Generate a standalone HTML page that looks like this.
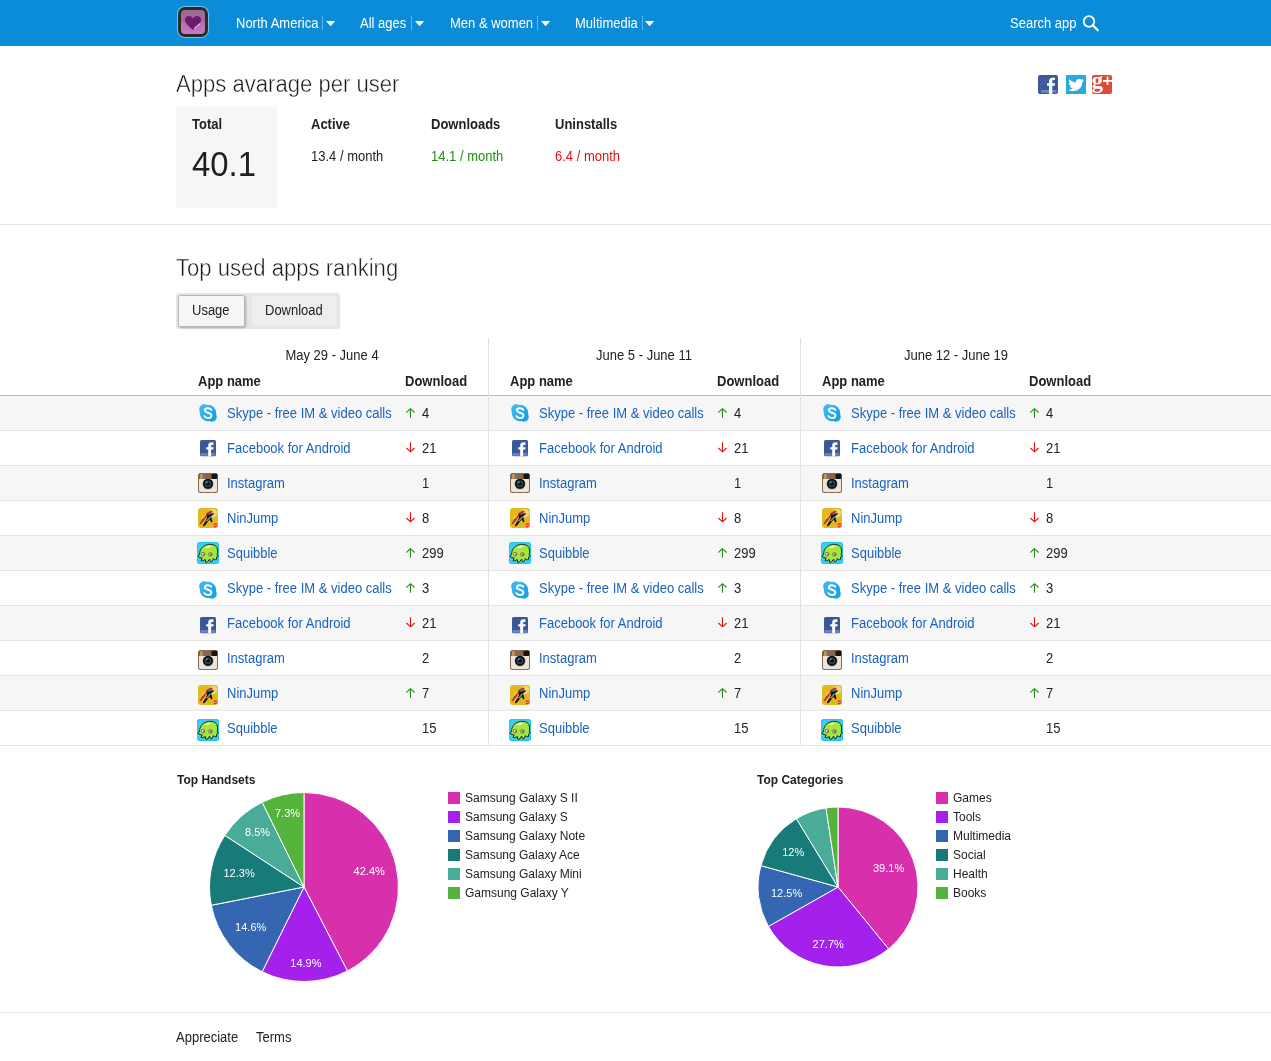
<!DOCTYPE html>
<html><head><meta charset="utf-8"><title>Apps</title>
<style>
*{margin:0;padding:0;box-sizing:border-box}
html,body{width:1271px;height:1061px;overflow:hidden;background:#fff}
#wrap{position:absolute;left:0;top:0;width:1271px;height:1061px;will-change:transform}
body{position:relative;font-family:"Liberation Sans",sans-serif;font-size:13px;color:#222}
.t{position:absolute;white-space:nowrap;line-height:13px;font-size:13px;transform:scaleY(1.1);transform-origin:0 6.5px}
.b{font-weight:bold}
#nav{position:absolute;left:0;top:0;width:1271px;height:46px;background:#0a8cd8}
.nv{color:#fff}
.sep{position:absolute;top:16px;width:1px;height:14px;background:#5fb6ea}
.tri{position:absolute;top:21px;width:10px;height:6px}
.tri svg{display:block}
h1.t{font-weight:normal;font-size:23px;line-height:23px;color:#1a1a1a;transform:scaleX(0.96);transform-origin:0 0;-webkit-text-stroke:0.45px #fff}
.row{position:absolute;left:0;width:1271px;height:34px}
.hl{position:absolute;left:0;width:1271px;height:1px;background:#e4e4e4}
.hl.hd{background:#bbb}
.vl{position:absolute;top:338px;width:1px;height:407px;background:#e2e2e2}
.date{width:312px;text-align:center}
.ib{position:absolute}
.ib svg,.ab svg{display:block}
.ab{position:absolute}
.lk{color:#1a62c0}
.sq{position:absolute;width:12px;height:12px}
.lg{font-size:12px;line-height:12px;transform:none}
</style></head><body><div id="wrap">
<div id="nav">
 <div style="position:absolute;left:178px;top:7px;width:30px;height:30px;border-radius:7px;background:#2c2a26;box-shadow:0 0 0 1px #6cc3f0"></div>
 <div style="position:absolute;left:181px;top:10px;width:24px;height:24px;border-radius:4px;background:linear-gradient(#9c6b95 0%,#9c6b95 45%,#b86fb5 55%,#c27cc0 100%)"></div>
 <svg style="position:absolute;left:184px;top:15px" width="18" height="16" viewBox="0 0 18 16"><path d="M9,15 C3,10 1,7.5 1,4.8 C1,2.5 2.8,1 4.8,1 C6.6,1 8,2 9,3.4 C10,2 11.4,1 13.2,1 C15.2,1 17,2.5 17,4.8 C17,7.5 15,10 9,15 Z" fill="#6e1a6e"/><path d="M10,13.5 L16,8.5" stroke="#f3e3f1" stroke-width="1"/></svg>
 <div class="t nv" style="left:236px;top:17px">North America</div>
 <div class="sep" style="left:322px"></div><div class="tri" style="left:326px"><svg width="10" height="6" viewBox="0 0 10 6"><path d="M0,0 H9.2 L4.6,5.2 Z" fill="#fff"/></svg></div>
 <div class="t nv" style="left:360px;top:17px">All ages</div>
 <div class="sep" style="left:411px"></div><div class="tri" style="left:415px"><svg width="10" height="6" viewBox="0 0 10 6"><path d="M0,0 H9.2 L4.6,5.2 Z" fill="#fff"/></svg></div>
 <div class="t nv" style="left:450px;top:17px">Men &amp; women</div>
 <div class="sep" style="left:537px"></div><div class="tri" style="left:541px"><svg width="10" height="6" viewBox="0 0 10 6"><path d="M0,0 H9.2 L4.6,5.2 Z" fill="#fff"/></svg></div>
 <div class="t nv" style="left:575px;top:17px">Multimedia</div>
 <div class="sep" style="left:642px"></div><div class="tri" style="left:645px"><svg width="10" height="6" viewBox="0 0 10 6"><path d="M0,0 H9.2 L4.6,5.2 Z" fill="#fff"/></svg></div>
 <div class="t nv" style="left:1010px;top:17px">Search app</div>
 <svg style="position:absolute;left:1081px;top:13px" width="20" height="20" viewBox="0 0 20 20"><circle cx="8" cy="8.5" r="5.3" fill="none" stroke="#fff" stroke-width="1.8"/><path d="M11.8,12.3 L16.8,17.3" stroke="#fff" stroke-width="2.2" stroke-linecap="round"/></svg>
</div>

<h1 class="t" style="left:176px;top:73px">Apps avarage per user</h1>
<div style="position:absolute;left:1038px;top:75px;width:20px;height:19px;border-radius:2px;background:#3b5998"><svg width="20" height="19" viewBox="0 0 20 19" style="display:block"><path d="M2,4 L5,7 L2,10 M5,4 L8,7 L5,10 M8,4 L10,6 M2,12 L4,14" stroke="#4a69a8" stroke-width="1" fill="none"/><rect x="3" y="15" width="15.5" height="2.8" fill="#6e85b9"/><path d="M11,19 V10.8 H9 V8.3 H11 V6.5 C11,4 12.2,2.7 14.5,2.7 H17 V4.9 H15.5 C14.6,4.9 14.3,5.3 14.3,6.2 V8.3 H17 L16.7,10.8 H14.3 V19 Z" fill="#fff"/></svg></div>
<div style="position:absolute;left:1066px;top:75px;width:20px;height:19px;background:#2aa9e0"><svg width="20" height="19" viewBox="0 0 20 19" style="display:block"><path transform="translate(10.1,9.8) scale(1.2,1.12) translate(-10.35,-9.45)" d="M17,5.2 C16.5,5.5 16,5.6 15.4,5.7 C16,5.3 16.4,4.8 16.6,4.2 C16.1,4.5 15.5,4.7 14.9,4.9 C14.4,4.3 13.7,4 12.9,4 C11.4,4 10.2,5.2 10.2,6.7 C10.2,6.9 10.2,7.1 10.3,7.3 C8,7.2 6,6.1 4.7,4.5 C4.4,4.9 4.3,5.4 4.3,5.9 C4.3,6.8 4.8,7.7 5.5,8.2 C5,8.2 4.6,8.1 4.3,7.9 C4.3,9.2 5.2,10.3 6.5,10.6 C6,10.7 5.6,10.8 5.2,10.7 C5.5,11.8 6.6,12.6 7.8,12.6 C6.8,13.4 5.6,13.8 4.3,13.8 C4.1,13.8 3.9,13.8 3.6,13.8 C4.8,14.6 6.3,15 7.8,15 C12.9,15 15.6,10.8 15.6,7.2 L15.6,6.8 C16.2,6.4 16.6,5.9 17,5.2 Z" fill="#fff"/></svg></div>
<div style="position:absolute;left:1092px;top:75px;width:20px;height:19px;border-radius:2px;background:#dc4a38;overflow:hidden"><svg width="20" height="19" viewBox="0 0 20 19" style="display:block"><text x="-0.5" y="12.5" font-family="Liberation Serif" font-size="23" font-weight="bold" fill="#fff">g</text><path d="M15.5,1.4 V10 M10.9,5.8 H20" stroke="#fff" stroke-width="1.7"/></svg></div>

<div style="position:absolute;left:176px;top:107px;width:101px;height:101px;background:#f6f6f6"></div>
<div class="t b" style="left:192px;top:118px">Total</div>
<div class="t" style="left:192px;top:146px;font-size:35px;line-height:35px;color:#1f1f1f;transform:scaleX(0.94);transform-origin:0 0">40.1</div>
<div class="t b" style="left:311px;top:118px">Active</div>
<div class="t" style="left:311px;top:150px">13.4 / month</div>
<div class="t b" style="left:431px;top:118px">Downloads</div>
<div class="t" style="left:431px;top:150px;color:#228b16">14.1 / month</div>
<div class="t b" style="left:555px;top:118px">Uninstalls</div>
<div class="t" style="left:555px;top:150px;color:#dd1111">6.4 / month</div>

<div class="hl" style="top:224px;background:#e6e6e6"></div>

<h1 class="t" style="left:176px;top:257px">Top used apps ranking</h1>
<div style="position:absolute;left:176px;top:293px;width:164px;height:36px;border-radius:3px;background:#e6e6e6"></div>
<div style="position:absolute;left:178px;top:295px;width:67px;height:32px;background:#f6f6f6;border:1px solid #b8b8b8;border-radius:2px;box-shadow:1px 1px 2px rgba(0,0,0,.25)"></div>
<div style="position:absolute;left:252px;top:296px;width:85px;height:30px;background:#eeeeee"></div>
<div class="t" style="left:192px;top:304px">Usage</div>
<div class="t" style="left:265px;top:304px">Download</div>

<div class="row" style="top:396px;background:#f6f6f6"></div>
<div class="hl" style="top:430px"></div>
<div class="row" style="top:431px;background:#fff"></div>
<div class="hl" style="top:465px"></div>
<div class="row" style="top:466px;background:#f6f6f6"></div>
<div class="hl" style="top:500px"></div>
<div class="row" style="top:501px;background:#fff"></div>
<div class="hl" style="top:535px"></div>
<div class="row" style="top:536px;background:#f6f6f6"></div>
<div class="hl" style="top:570px"></div>
<div class="row" style="top:571px;background:#fff"></div>
<div class="hl" style="top:605px"></div>
<div class="row" style="top:606px;background:#f6f6f6"></div>
<div class="hl" style="top:640px"></div>
<div class="row" style="top:641px;background:#fff"></div>
<div class="hl" style="top:675px"></div>
<div class="row" style="top:676px;background:#f6f6f6"></div>
<div class="hl" style="top:710px"></div>
<div class="row" style="top:711px;background:#fff"></div>
<div class="hl" style="top:745px"></div>
<div class="hl hd" style="top:395px"></div>
<div class="vl" style="left:488px"></div>
<div class="vl" style="left:800px"></div>
<div class="t date" style="left:176px;top:349px">May 29 - June 4</div>
<div class="t b" style="left:198px;top:375px">App name</div>
<div class="t b" style="left:405px;top:375px">Download</div>
<div class="ib" style="left:198px;top:403px"><svg class="ic" width="20" height="20" viewBox="0 0 20 20"><defs><linearGradient id="sg" x1="0" y1="0" x2="1" y2="1"><stop offset="0" stop-color="#49bdf2"/><stop offset="1" stop-color="#0c9be0"/></linearGradient></defs><g fill="url(#sg)"><circle cx="6.2" cy="6.2" r="5"/><circle cx="13.8" cy="13.8" r="5"/><circle cx="10" cy="10" r="8.2"/></g><path d="M13.2,6.6 C12.4,5.6 11.3,5.2 10,5.2 C8.2,5.2 6.9,6.1 6.9,7.5 C6.9,10.3 13.4,9.3 13.4,12.4 C13.4,13.9 12,14.9 10,14.9 C8.4,14.9 7.2,14.3 6.5,13.2" fill="none" stroke="#fff" stroke-width="2" stroke-linecap="round"/></svg></div>
<div class="t lk" style="left:227px;top:407px">Skype - free IM &amp; video calls</div>
<div class="ab" style="left:405px;top:407px"><svg class="ar" width="11" height="11" viewBox="0 0 11 11"><path d="M5.5,10.8 V2 M1.4,5.5 L5.5,1.7 L9.6,5.5" fill="none" stroke="#2b8a1e" stroke-width="1.1"/></svg></div>
<div class="t" style="left:422px;top:407px">4</div>
<div class="ib" style="left:198px;top:438px"><svg class="ic" width="20" height="20" viewBox="0 0 20 20"><rect x="2" y="2" width="16" height="16.2" rx="1.5" fill="#3a5899"/><rect x="2.5" y="15" width="15" height="2.8" fill="#6a80b9"/><path d="M10.2,18.2 V11.4 H8.3 V9.2 H10.2 V7.6 C10.2,5.3 11.3,4.2 13.5,4.2 H15.4 V6.9 H14.3 C13.4,6.9 13.1,7.2 13.1,8 V9.2 H15.6 L15.3,11.4 H13.1 V18.2 Z" fill="#fff"/></svg></div>
<div class="t lk" style="left:227px;top:442px">Facebook for Android</div>
<div class="ab" style="left:405px;top:442px"><svg class="ar" width="11" height="11" viewBox="0 0 11 11"><path d="M5.5,0.2 V9.5 M1.4,6 L5.5,9.8 L9.6,6" fill="none" stroke="#dd1111" stroke-width="1.1"/></svg></div>
<div class="t" style="left:422px;top:442px">21</div>
<div class="ib" style="left:198px;top:473px"><svg class="ic" width="20" height="20" viewBox="0 0 20 20"><rect x="0" y="0" width="20" height="20" rx="3" fill="#6b4a32"/><rect x="0.8" y="0.8" width="18.4" height="18.4" rx="2.5" fill="#ece4d8"/><path d="M0.8,6 V3 C0.8,1.6 1.6,0.8 3,0.8 H17 C18.4,0.8 19.2,1.6 19.2,3 V6 Z" fill="#8e6446"/><rect x="1" y="1" width="1.3" height="5" fill="#e8342a"/><rect x="2.3" y="1" width="1.1" height="5" fill="#f29a28"/><rect x="3.4" y="1" width="1.1" height="5" fill="#9ad33a"/><rect x="4.5" y="1" width="1.2" height="5" fill="#2f8ee0"/><rect x="13.5" y="0.8" width="5.7" height="5.2" rx="1" fill="#151515"/><circle cx="10" cy="11" r="5.3" fill="#5a4636"/><circle cx="10" cy="10.7" r="4.8" fill="#0c0c0e"/><circle cx="10" cy="10.7" r="3.3" fill="#274a5c"/><circle cx="10" cy="10.7" r="1.8" fill="#080a10"/><circle cx="8.8" cy="9.3" r="0.8" fill="#6fc0d8"/></svg></div>
<div class="t lk" style="left:227px;top:477px">Instagram</div>
<div class="t" style="left:422px;top:477px">1</div>
<div class="ib" style="left:198px;top:508px"><svg class="ic" width="20" height="20" viewBox="0 0 20 20"><rect x="0" y="0" width="20" height="20" rx="3" fill="#e2b81c"/><ellipse cx="15" cy="5" rx="4.5" ry="4" fill="#f0d878"/><ellipse cx="6" cy="12" rx="3" ry="5" fill="#ecc935" opacity="0.7"/><path d="M1.4,15.5 L9,6 L9.8,4 L14,2.2 L14.6,4.2 L10.5,6.5 L3,16.4 Z" fill="#e3241a"/><path d="M8.5,5 L16.6,5.5 L13,8.5 L14.5,13.5 L13.3,14.6 L11.5,11.5 L7.5,17 L5.5,18.6 L4.8,17.4 L9,10 Z" fill="#121212"/><path d="M9.2,5.6 L14,4.6 L14,6.1 L9.6,7 Z" fill="#2a8a9a"/><path d="M8,13.6 L12.8,8.6" stroke="#e8eef5" stroke-width="1"/><path d="M3.6,12.8 L6,10.8" stroke="#2a6a80" stroke-width="1.4"/><path d="M15.6,15.6 H19.4 L19,18.6 L17.5,19.6 L16,18.6 Z" fill="#e3161b"/><path d="M16.7,16.3 V17.6 H18.3 V16.3" stroke="#fff" stroke-width="0.6" fill="none"/></svg></div>
<div class="t lk" style="left:227px;top:512px">NinJump</div>
<div class="ab" style="left:405px;top:512px"><svg class="ar" width="11" height="11" viewBox="0 0 11 11"><path d="M5.5,0.2 V9.5 M1.4,6 L5.5,9.8 L9.6,6" fill="none" stroke="#dd1111" stroke-width="1.1"/></svg></div>
<div class="t" style="left:422px;top:512px">8</div>
<div class="ib" style="left:197px;top:542px"><svg class="ic" width="22" height="22" viewBox="0 0 22 22"><rect x="0" y="0" width="22" height="22" rx="2.5" fill="#27c3f5"/><rect x="1.2" y="1.2" width="19.6" height="19.6" rx="2" fill="#5fdcfc" opacity="0.45"/><path d="M2.6,12 C2.6,8 5,4.6 9,3.1 C12,2 16,1.8 18.5,3.8 C21,5.8 20.9,10 20.2,12.6 L21.2,14 L19.6,15 L19.3,17.8 L17.6,17.8 L16.4,16.6 L14.8,19.8 L13.2,19.6 L12.6,17.2 L10.2,20.3 L8.6,20.1 L8.3,17.6 L5.2,18.9 L4,18.3 L5.2,16.1 L2.2,15.3 L1.4,14 Z" fill="#a3e83c" stroke="#121c08" stroke-width="0.9" stroke-linejoin="round"/><ellipse cx="11" cy="4.8" rx="3.2" ry="1.1" fill="#f3f2b0" transform="rotate(-12 11 4.8)"/><circle cx="6" cy="12.2" r="1.8" fill="#fff" stroke="#121c08" stroke-width="0.5"/><circle cx="13.4" cy="12.4" r="1.8" fill="#d8c8ea" stroke="#121c08" stroke-width="0.5"/><circle cx="6.6" cy="12.4" r="0.95" fill="#d2222e"/><circle cx="13.9" cy="12.6" r="0.95" fill="#d2222e"/></svg></div>
<div class="t lk" style="left:227px;top:547px">Squibble</div>
<div class="ab" style="left:405px;top:547px"><svg class="ar" width="11" height="11" viewBox="0 0 11 11"><path d="M5.5,10.8 V2 M1.4,5.5 L5.5,1.7 L9.6,5.5" fill="none" stroke="#2b8a1e" stroke-width="1.1"/></svg></div>
<div class="t" style="left:422px;top:547px">299</div>
<div class="ib" style="left:198px;top:580px"><svg class="ic" width="20" height="20" viewBox="0 0 20 20"><defs><linearGradient id="sg" x1="0" y1="0" x2="1" y2="1"><stop offset="0" stop-color="#49bdf2"/><stop offset="1" stop-color="#0c9be0"/></linearGradient></defs><g fill="url(#sg)"><circle cx="6.2" cy="6.2" r="5"/><circle cx="13.8" cy="13.8" r="5"/><circle cx="10" cy="10" r="8.2"/></g><path d="M13.2,6.6 C12.4,5.6 11.3,5.2 10,5.2 C8.2,5.2 6.9,6.1 6.9,7.5 C6.9,10.3 13.4,9.3 13.4,12.4 C13.4,13.9 12,14.9 10,14.9 C8.4,14.9 7.2,14.3 6.5,13.2" fill="none" stroke="#fff" stroke-width="2" stroke-linecap="round"/></svg></div>
<div class="t lk" style="left:227px;top:582px">Skype - free IM &amp; video calls</div>
<div class="ab" style="left:405px;top:582px"><svg class="ar" width="11" height="11" viewBox="0 0 11 11"><path d="M5.5,10.8 V2 M1.4,5.5 L5.5,1.7 L9.6,5.5" fill="none" stroke="#2b8a1e" stroke-width="1.1"/></svg></div>
<div class="t" style="left:422px;top:582px">3</div>
<div class="ib" style="left:198px;top:615px"><svg class="ic" width="20" height="20" viewBox="0 0 20 20"><rect x="2" y="2" width="16" height="16.2" rx="1.5" fill="#3a5899"/><rect x="2.5" y="15" width="15" height="2.8" fill="#6a80b9"/><path d="M10.2,18.2 V11.4 H8.3 V9.2 H10.2 V7.6 C10.2,5.3 11.3,4.2 13.5,4.2 H15.4 V6.9 H14.3 C13.4,6.9 13.1,7.2 13.1,8 V9.2 H15.6 L15.3,11.4 H13.1 V18.2 Z" fill="#fff"/></svg></div>
<div class="t lk" style="left:227px;top:617px">Facebook for Android</div>
<div class="ab" style="left:405px;top:617px"><svg class="ar" width="11" height="11" viewBox="0 0 11 11"><path d="M5.5,0.2 V9.5 M1.4,6 L5.5,9.8 L9.6,6" fill="none" stroke="#dd1111" stroke-width="1.1"/></svg></div>
<div class="t" style="left:422px;top:617px">21</div>
<div class="ib" style="left:198px;top:650px"><svg class="ic" width="20" height="20" viewBox="0 0 20 20"><rect x="0" y="0" width="20" height="20" rx="3" fill="#6b4a32"/><rect x="0.8" y="0.8" width="18.4" height="18.4" rx="2.5" fill="#ece4d8"/><path d="M0.8,6 V3 C0.8,1.6 1.6,0.8 3,0.8 H17 C18.4,0.8 19.2,1.6 19.2,3 V6 Z" fill="#8e6446"/><rect x="1" y="1" width="1.3" height="5" fill="#e8342a"/><rect x="2.3" y="1" width="1.1" height="5" fill="#f29a28"/><rect x="3.4" y="1" width="1.1" height="5" fill="#9ad33a"/><rect x="4.5" y="1" width="1.2" height="5" fill="#2f8ee0"/><rect x="13.5" y="0.8" width="5.7" height="5.2" rx="1" fill="#151515"/><circle cx="10" cy="11" r="5.3" fill="#5a4636"/><circle cx="10" cy="10.7" r="4.8" fill="#0c0c0e"/><circle cx="10" cy="10.7" r="3.3" fill="#274a5c"/><circle cx="10" cy="10.7" r="1.8" fill="#080a10"/><circle cx="8.8" cy="9.3" r="0.8" fill="#6fc0d8"/></svg></div>
<div class="t lk" style="left:227px;top:652px">Instagram</div>
<div class="t" style="left:422px;top:652px">2</div>
<div class="ib" style="left:198px;top:685px"><svg class="ic" width="20" height="20" viewBox="0 0 20 20"><rect x="0" y="0" width="20" height="20" rx="3" fill="#e2b81c"/><ellipse cx="15" cy="5" rx="4.5" ry="4" fill="#f0d878"/><ellipse cx="6" cy="12" rx="3" ry="5" fill="#ecc935" opacity="0.7"/><path d="M1.4,15.5 L9,6 L9.8,4 L14,2.2 L14.6,4.2 L10.5,6.5 L3,16.4 Z" fill="#e3241a"/><path d="M8.5,5 L16.6,5.5 L13,8.5 L14.5,13.5 L13.3,14.6 L11.5,11.5 L7.5,17 L5.5,18.6 L4.8,17.4 L9,10 Z" fill="#121212"/><path d="M9.2,5.6 L14,4.6 L14,6.1 L9.6,7 Z" fill="#2a8a9a"/><path d="M8,13.6 L12.8,8.6" stroke="#e8eef5" stroke-width="1"/><path d="M3.6,12.8 L6,10.8" stroke="#2a6a80" stroke-width="1.4"/><path d="M15.6,15.6 H19.4 L19,18.6 L17.5,19.6 L16,18.6 Z" fill="#e3161b"/><path d="M16.7,16.3 V17.6 H18.3 V16.3" stroke="#fff" stroke-width="0.6" fill="none"/></svg></div>
<div class="t lk" style="left:227px;top:687px">NinJump</div>
<div class="ab" style="left:405px;top:687px"><svg class="ar" width="11" height="11" viewBox="0 0 11 11"><path d="M5.5,10.8 V2 M1.4,5.5 L5.5,1.7 L9.6,5.5" fill="none" stroke="#2b8a1e" stroke-width="1.1"/></svg></div>
<div class="t" style="left:422px;top:687px">7</div>
<div class="ib" style="left:197px;top:719px"><svg class="ic" width="22" height="22" viewBox="0 0 22 22"><rect x="0" y="0" width="22" height="22" rx="2.5" fill="#27c3f5"/><rect x="1.2" y="1.2" width="19.6" height="19.6" rx="2" fill="#5fdcfc" opacity="0.45"/><path d="M2.6,12 C2.6,8 5,4.6 9,3.1 C12,2 16,1.8 18.5,3.8 C21,5.8 20.9,10 20.2,12.6 L21.2,14 L19.6,15 L19.3,17.8 L17.6,17.8 L16.4,16.6 L14.8,19.8 L13.2,19.6 L12.6,17.2 L10.2,20.3 L8.6,20.1 L8.3,17.6 L5.2,18.9 L4,18.3 L5.2,16.1 L2.2,15.3 L1.4,14 Z" fill="#a3e83c" stroke="#121c08" stroke-width="0.9" stroke-linejoin="round"/><ellipse cx="11" cy="4.8" rx="3.2" ry="1.1" fill="#f3f2b0" transform="rotate(-12 11 4.8)"/><circle cx="6" cy="12.2" r="1.8" fill="#fff" stroke="#121c08" stroke-width="0.5"/><circle cx="13.4" cy="12.4" r="1.8" fill="#d8c8ea" stroke="#121c08" stroke-width="0.5"/><circle cx="6.6" cy="12.4" r="0.95" fill="#d2222e"/><circle cx="13.9" cy="12.6" r="0.95" fill="#d2222e"/></svg></div>
<div class="t lk" style="left:227px;top:722px">Squibble</div>
<div class="t" style="left:422px;top:722px">15</div>
<div class="t date" style="left:488px;top:349px">June 5 - June 11</div>
<div class="t b" style="left:510px;top:375px">App name</div>
<div class="t b" style="left:717px;top:375px">Download</div>
<div class="ib" style="left:510px;top:403px"><svg class="ic" width="20" height="20" viewBox="0 0 20 20"><defs><linearGradient id="sg" x1="0" y1="0" x2="1" y2="1"><stop offset="0" stop-color="#49bdf2"/><stop offset="1" stop-color="#0c9be0"/></linearGradient></defs><g fill="url(#sg)"><circle cx="6.2" cy="6.2" r="5"/><circle cx="13.8" cy="13.8" r="5"/><circle cx="10" cy="10" r="8.2"/></g><path d="M13.2,6.6 C12.4,5.6 11.3,5.2 10,5.2 C8.2,5.2 6.9,6.1 6.9,7.5 C6.9,10.3 13.4,9.3 13.4,12.4 C13.4,13.9 12,14.9 10,14.9 C8.4,14.9 7.2,14.3 6.5,13.2" fill="none" stroke="#fff" stroke-width="2" stroke-linecap="round"/></svg></div>
<div class="t lk" style="left:539px;top:407px">Skype - free IM &amp; video calls</div>
<div class="ab" style="left:717px;top:407px"><svg class="ar" width="11" height="11" viewBox="0 0 11 11"><path d="M5.5,10.8 V2 M1.4,5.5 L5.5,1.7 L9.6,5.5" fill="none" stroke="#2b8a1e" stroke-width="1.1"/></svg></div>
<div class="t" style="left:734px;top:407px">4</div>
<div class="ib" style="left:510px;top:438px"><svg class="ic" width="20" height="20" viewBox="0 0 20 20"><rect x="2" y="2" width="16" height="16.2" rx="1.5" fill="#3a5899"/><rect x="2.5" y="15" width="15" height="2.8" fill="#6a80b9"/><path d="M10.2,18.2 V11.4 H8.3 V9.2 H10.2 V7.6 C10.2,5.3 11.3,4.2 13.5,4.2 H15.4 V6.9 H14.3 C13.4,6.9 13.1,7.2 13.1,8 V9.2 H15.6 L15.3,11.4 H13.1 V18.2 Z" fill="#fff"/></svg></div>
<div class="t lk" style="left:539px;top:442px">Facebook for Android</div>
<div class="ab" style="left:717px;top:442px"><svg class="ar" width="11" height="11" viewBox="0 0 11 11"><path d="M5.5,0.2 V9.5 M1.4,6 L5.5,9.8 L9.6,6" fill="none" stroke="#dd1111" stroke-width="1.1"/></svg></div>
<div class="t" style="left:734px;top:442px">21</div>
<div class="ib" style="left:510px;top:473px"><svg class="ic" width="20" height="20" viewBox="0 0 20 20"><rect x="0" y="0" width="20" height="20" rx="3" fill="#6b4a32"/><rect x="0.8" y="0.8" width="18.4" height="18.4" rx="2.5" fill="#ece4d8"/><path d="M0.8,6 V3 C0.8,1.6 1.6,0.8 3,0.8 H17 C18.4,0.8 19.2,1.6 19.2,3 V6 Z" fill="#8e6446"/><rect x="1" y="1" width="1.3" height="5" fill="#e8342a"/><rect x="2.3" y="1" width="1.1" height="5" fill="#f29a28"/><rect x="3.4" y="1" width="1.1" height="5" fill="#9ad33a"/><rect x="4.5" y="1" width="1.2" height="5" fill="#2f8ee0"/><rect x="13.5" y="0.8" width="5.7" height="5.2" rx="1" fill="#151515"/><circle cx="10" cy="11" r="5.3" fill="#5a4636"/><circle cx="10" cy="10.7" r="4.8" fill="#0c0c0e"/><circle cx="10" cy="10.7" r="3.3" fill="#274a5c"/><circle cx="10" cy="10.7" r="1.8" fill="#080a10"/><circle cx="8.8" cy="9.3" r="0.8" fill="#6fc0d8"/></svg></div>
<div class="t lk" style="left:539px;top:477px">Instagram</div>
<div class="t" style="left:734px;top:477px">1</div>
<div class="ib" style="left:510px;top:508px"><svg class="ic" width="20" height="20" viewBox="0 0 20 20"><rect x="0" y="0" width="20" height="20" rx="3" fill="#e2b81c"/><ellipse cx="15" cy="5" rx="4.5" ry="4" fill="#f0d878"/><ellipse cx="6" cy="12" rx="3" ry="5" fill="#ecc935" opacity="0.7"/><path d="M1.4,15.5 L9,6 L9.8,4 L14,2.2 L14.6,4.2 L10.5,6.5 L3,16.4 Z" fill="#e3241a"/><path d="M8.5,5 L16.6,5.5 L13,8.5 L14.5,13.5 L13.3,14.6 L11.5,11.5 L7.5,17 L5.5,18.6 L4.8,17.4 L9,10 Z" fill="#121212"/><path d="M9.2,5.6 L14,4.6 L14,6.1 L9.6,7 Z" fill="#2a8a9a"/><path d="M8,13.6 L12.8,8.6" stroke="#e8eef5" stroke-width="1"/><path d="M3.6,12.8 L6,10.8" stroke="#2a6a80" stroke-width="1.4"/><path d="M15.6,15.6 H19.4 L19,18.6 L17.5,19.6 L16,18.6 Z" fill="#e3161b"/><path d="M16.7,16.3 V17.6 H18.3 V16.3" stroke="#fff" stroke-width="0.6" fill="none"/></svg></div>
<div class="t lk" style="left:539px;top:512px">NinJump</div>
<div class="ab" style="left:717px;top:512px"><svg class="ar" width="11" height="11" viewBox="0 0 11 11"><path d="M5.5,0.2 V9.5 M1.4,6 L5.5,9.8 L9.6,6" fill="none" stroke="#dd1111" stroke-width="1.1"/></svg></div>
<div class="t" style="left:734px;top:512px">8</div>
<div class="ib" style="left:509px;top:542px"><svg class="ic" width="22" height="22" viewBox="0 0 22 22"><rect x="0" y="0" width="22" height="22" rx="2.5" fill="#27c3f5"/><rect x="1.2" y="1.2" width="19.6" height="19.6" rx="2" fill="#5fdcfc" opacity="0.45"/><path d="M2.6,12 C2.6,8 5,4.6 9,3.1 C12,2 16,1.8 18.5,3.8 C21,5.8 20.9,10 20.2,12.6 L21.2,14 L19.6,15 L19.3,17.8 L17.6,17.8 L16.4,16.6 L14.8,19.8 L13.2,19.6 L12.6,17.2 L10.2,20.3 L8.6,20.1 L8.3,17.6 L5.2,18.9 L4,18.3 L5.2,16.1 L2.2,15.3 L1.4,14 Z" fill="#a3e83c" stroke="#121c08" stroke-width="0.9" stroke-linejoin="round"/><ellipse cx="11" cy="4.8" rx="3.2" ry="1.1" fill="#f3f2b0" transform="rotate(-12 11 4.8)"/><circle cx="6" cy="12.2" r="1.8" fill="#fff" stroke="#121c08" stroke-width="0.5"/><circle cx="13.4" cy="12.4" r="1.8" fill="#d8c8ea" stroke="#121c08" stroke-width="0.5"/><circle cx="6.6" cy="12.4" r="0.95" fill="#d2222e"/><circle cx="13.9" cy="12.6" r="0.95" fill="#d2222e"/></svg></div>
<div class="t lk" style="left:539px;top:547px">Squibble</div>
<div class="ab" style="left:717px;top:547px"><svg class="ar" width="11" height="11" viewBox="0 0 11 11"><path d="M5.5,10.8 V2 M1.4,5.5 L5.5,1.7 L9.6,5.5" fill="none" stroke="#2b8a1e" stroke-width="1.1"/></svg></div>
<div class="t" style="left:734px;top:547px">299</div>
<div class="ib" style="left:510px;top:580px"><svg class="ic" width="20" height="20" viewBox="0 0 20 20"><defs><linearGradient id="sg" x1="0" y1="0" x2="1" y2="1"><stop offset="0" stop-color="#49bdf2"/><stop offset="1" stop-color="#0c9be0"/></linearGradient></defs><g fill="url(#sg)"><circle cx="6.2" cy="6.2" r="5"/><circle cx="13.8" cy="13.8" r="5"/><circle cx="10" cy="10" r="8.2"/></g><path d="M13.2,6.6 C12.4,5.6 11.3,5.2 10,5.2 C8.2,5.2 6.9,6.1 6.9,7.5 C6.9,10.3 13.4,9.3 13.4,12.4 C13.4,13.9 12,14.9 10,14.9 C8.4,14.9 7.2,14.3 6.5,13.2" fill="none" stroke="#fff" stroke-width="2" stroke-linecap="round"/></svg></div>
<div class="t lk" style="left:539px;top:582px">Skype - free IM &amp; video calls</div>
<div class="ab" style="left:717px;top:582px"><svg class="ar" width="11" height="11" viewBox="0 0 11 11"><path d="M5.5,10.8 V2 M1.4,5.5 L5.5,1.7 L9.6,5.5" fill="none" stroke="#2b8a1e" stroke-width="1.1"/></svg></div>
<div class="t" style="left:734px;top:582px">3</div>
<div class="ib" style="left:510px;top:615px"><svg class="ic" width="20" height="20" viewBox="0 0 20 20"><rect x="2" y="2" width="16" height="16.2" rx="1.5" fill="#3a5899"/><rect x="2.5" y="15" width="15" height="2.8" fill="#6a80b9"/><path d="M10.2,18.2 V11.4 H8.3 V9.2 H10.2 V7.6 C10.2,5.3 11.3,4.2 13.5,4.2 H15.4 V6.9 H14.3 C13.4,6.9 13.1,7.2 13.1,8 V9.2 H15.6 L15.3,11.4 H13.1 V18.2 Z" fill="#fff"/></svg></div>
<div class="t lk" style="left:539px;top:617px">Facebook for Android</div>
<div class="ab" style="left:717px;top:617px"><svg class="ar" width="11" height="11" viewBox="0 0 11 11"><path d="M5.5,0.2 V9.5 M1.4,6 L5.5,9.8 L9.6,6" fill="none" stroke="#dd1111" stroke-width="1.1"/></svg></div>
<div class="t" style="left:734px;top:617px">21</div>
<div class="ib" style="left:510px;top:650px"><svg class="ic" width="20" height="20" viewBox="0 0 20 20"><rect x="0" y="0" width="20" height="20" rx="3" fill="#6b4a32"/><rect x="0.8" y="0.8" width="18.4" height="18.4" rx="2.5" fill="#ece4d8"/><path d="M0.8,6 V3 C0.8,1.6 1.6,0.8 3,0.8 H17 C18.4,0.8 19.2,1.6 19.2,3 V6 Z" fill="#8e6446"/><rect x="1" y="1" width="1.3" height="5" fill="#e8342a"/><rect x="2.3" y="1" width="1.1" height="5" fill="#f29a28"/><rect x="3.4" y="1" width="1.1" height="5" fill="#9ad33a"/><rect x="4.5" y="1" width="1.2" height="5" fill="#2f8ee0"/><rect x="13.5" y="0.8" width="5.7" height="5.2" rx="1" fill="#151515"/><circle cx="10" cy="11" r="5.3" fill="#5a4636"/><circle cx="10" cy="10.7" r="4.8" fill="#0c0c0e"/><circle cx="10" cy="10.7" r="3.3" fill="#274a5c"/><circle cx="10" cy="10.7" r="1.8" fill="#080a10"/><circle cx="8.8" cy="9.3" r="0.8" fill="#6fc0d8"/></svg></div>
<div class="t lk" style="left:539px;top:652px">Instagram</div>
<div class="t" style="left:734px;top:652px">2</div>
<div class="ib" style="left:510px;top:685px"><svg class="ic" width="20" height="20" viewBox="0 0 20 20"><rect x="0" y="0" width="20" height="20" rx="3" fill="#e2b81c"/><ellipse cx="15" cy="5" rx="4.5" ry="4" fill="#f0d878"/><ellipse cx="6" cy="12" rx="3" ry="5" fill="#ecc935" opacity="0.7"/><path d="M1.4,15.5 L9,6 L9.8,4 L14,2.2 L14.6,4.2 L10.5,6.5 L3,16.4 Z" fill="#e3241a"/><path d="M8.5,5 L16.6,5.5 L13,8.5 L14.5,13.5 L13.3,14.6 L11.5,11.5 L7.5,17 L5.5,18.6 L4.8,17.4 L9,10 Z" fill="#121212"/><path d="M9.2,5.6 L14,4.6 L14,6.1 L9.6,7 Z" fill="#2a8a9a"/><path d="M8,13.6 L12.8,8.6" stroke="#e8eef5" stroke-width="1"/><path d="M3.6,12.8 L6,10.8" stroke="#2a6a80" stroke-width="1.4"/><path d="M15.6,15.6 H19.4 L19,18.6 L17.5,19.6 L16,18.6 Z" fill="#e3161b"/><path d="M16.7,16.3 V17.6 H18.3 V16.3" stroke="#fff" stroke-width="0.6" fill="none"/></svg></div>
<div class="t lk" style="left:539px;top:687px">NinJump</div>
<div class="ab" style="left:717px;top:687px"><svg class="ar" width="11" height="11" viewBox="0 0 11 11"><path d="M5.5,10.8 V2 M1.4,5.5 L5.5,1.7 L9.6,5.5" fill="none" stroke="#2b8a1e" stroke-width="1.1"/></svg></div>
<div class="t" style="left:734px;top:687px">7</div>
<div class="ib" style="left:509px;top:719px"><svg class="ic" width="22" height="22" viewBox="0 0 22 22"><rect x="0" y="0" width="22" height="22" rx="2.5" fill="#27c3f5"/><rect x="1.2" y="1.2" width="19.6" height="19.6" rx="2" fill="#5fdcfc" opacity="0.45"/><path d="M2.6,12 C2.6,8 5,4.6 9,3.1 C12,2 16,1.8 18.5,3.8 C21,5.8 20.9,10 20.2,12.6 L21.2,14 L19.6,15 L19.3,17.8 L17.6,17.8 L16.4,16.6 L14.8,19.8 L13.2,19.6 L12.6,17.2 L10.2,20.3 L8.6,20.1 L8.3,17.6 L5.2,18.9 L4,18.3 L5.2,16.1 L2.2,15.3 L1.4,14 Z" fill="#a3e83c" stroke="#121c08" stroke-width="0.9" stroke-linejoin="round"/><ellipse cx="11" cy="4.8" rx="3.2" ry="1.1" fill="#f3f2b0" transform="rotate(-12 11 4.8)"/><circle cx="6" cy="12.2" r="1.8" fill="#fff" stroke="#121c08" stroke-width="0.5"/><circle cx="13.4" cy="12.4" r="1.8" fill="#d8c8ea" stroke="#121c08" stroke-width="0.5"/><circle cx="6.6" cy="12.4" r="0.95" fill="#d2222e"/><circle cx="13.9" cy="12.6" r="0.95" fill="#d2222e"/></svg></div>
<div class="t lk" style="left:539px;top:722px">Squibble</div>
<div class="t" style="left:734px;top:722px">15</div>
<div class="t date" style="left:800px;top:349px">June 12 - June 19</div>
<div class="t b" style="left:822px;top:375px">App name</div>
<div class="t b" style="left:1029px;top:375px">Download</div>
<div class="ib" style="left:822px;top:403px"><svg class="ic" width="20" height="20" viewBox="0 0 20 20"><defs><linearGradient id="sg" x1="0" y1="0" x2="1" y2="1"><stop offset="0" stop-color="#49bdf2"/><stop offset="1" stop-color="#0c9be0"/></linearGradient></defs><g fill="url(#sg)"><circle cx="6.2" cy="6.2" r="5"/><circle cx="13.8" cy="13.8" r="5"/><circle cx="10" cy="10" r="8.2"/></g><path d="M13.2,6.6 C12.4,5.6 11.3,5.2 10,5.2 C8.2,5.2 6.9,6.1 6.9,7.5 C6.9,10.3 13.4,9.3 13.4,12.4 C13.4,13.9 12,14.9 10,14.9 C8.4,14.9 7.2,14.3 6.5,13.2" fill="none" stroke="#fff" stroke-width="2" stroke-linecap="round"/></svg></div>
<div class="t lk" style="left:851px;top:407px">Skype - free IM &amp; video calls</div>
<div class="ab" style="left:1029px;top:407px"><svg class="ar" width="11" height="11" viewBox="0 0 11 11"><path d="M5.5,10.8 V2 M1.4,5.5 L5.5,1.7 L9.6,5.5" fill="none" stroke="#2b8a1e" stroke-width="1.1"/></svg></div>
<div class="t" style="left:1046px;top:407px">4</div>
<div class="ib" style="left:822px;top:438px"><svg class="ic" width="20" height="20" viewBox="0 0 20 20"><rect x="2" y="2" width="16" height="16.2" rx="1.5" fill="#3a5899"/><rect x="2.5" y="15" width="15" height="2.8" fill="#6a80b9"/><path d="M10.2,18.2 V11.4 H8.3 V9.2 H10.2 V7.6 C10.2,5.3 11.3,4.2 13.5,4.2 H15.4 V6.9 H14.3 C13.4,6.9 13.1,7.2 13.1,8 V9.2 H15.6 L15.3,11.4 H13.1 V18.2 Z" fill="#fff"/></svg></div>
<div class="t lk" style="left:851px;top:442px">Facebook for Android</div>
<div class="ab" style="left:1029px;top:442px"><svg class="ar" width="11" height="11" viewBox="0 0 11 11"><path d="M5.5,0.2 V9.5 M1.4,6 L5.5,9.8 L9.6,6" fill="none" stroke="#dd1111" stroke-width="1.1"/></svg></div>
<div class="t" style="left:1046px;top:442px">21</div>
<div class="ib" style="left:822px;top:473px"><svg class="ic" width="20" height="20" viewBox="0 0 20 20"><rect x="0" y="0" width="20" height="20" rx="3" fill="#6b4a32"/><rect x="0.8" y="0.8" width="18.4" height="18.4" rx="2.5" fill="#ece4d8"/><path d="M0.8,6 V3 C0.8,1.6 1.6,0.8 3,0.8 H17 C18.4,0.8 19.2,1.6 19.2,3 V6 Z" fill="#8e6446"/><rect x="1" y="1" width="1.3" height="5" fill="#e8342a"/><rect x="2.3" y="1" width="1.1" height="5" fill="#f29a28"/><rect x="3.4" y="1" width="1.1" height="5" fill="#9ad33a"/><rect x="4.5" y="1" width="1.2" height="5" fill="#2f8ee0"/><rect x="13.5" y="0.8" width="5.7" height="5.2" rx="1" fill="#151515"/><circle cx="10" cy="11" r="5.3" fill="#5a4636"/><circle cx="10" cy="10.7" r="4.8" fill="#0c0c0e"/><circle cx="10" cy="10.7" r="3.3" fill="#274a5c"/><circle cx="10" cy="10.7" r="1.8" fill="#080a10"/><circle cx="8.8" cy="9.3" r="0.8" fill="#6fc0d8"/></svg></div>
<div class="t lk" style="left:851px;top:477px">Instagram</div>
<div class="t" style="left:1046px;top:477px">1</div>
<div class="ib" style="left:822px;top:508px"><svg class="ic" width="20" height="20" viewBox="0 0 20 20"><rect x="0" y="0" width="20" height="20" rx="3" fill="#e2b81c"/><ellipse cx="15" cy="5" rx="4.5" ry="4" fill="#f0d878"/><ellipse cx="6" cy="12" rx="3" ry="5" fill="#ecc935" opacity="0.7"/><path d="M1.4,15.5 L9,6 L9.8,4 L14,2.2 L14.6,4.2 L10.5,6.5 L3,16.4 Z" fill="#e3241a"/><path d="M8.5,5 L16.6,5.5 L13,8.5 L14.5,13.5 L13.3,14.6 L11.5,11.5 L7.5,17 L5.5,18.6 L4.8,17.4 L9,10 Z" fill="#121212"/><path d="M9.2,5.6 L14,4.6 L14,6.1 L9.6,7 Z" fill="#2a8a9a"/><path d="M8,13.6 L12.8,8.6" stroke="#e8eef5" stroke-width="1"/><path d="M3.6,12.8 L6,10.8" stroke="#2a6a80" stroke-width="1.4"/><path d="M15.6,15.6 H19.4 L19,18.6 L17.5,19.6 L16,18.6 Z" fill="#e3161b"/><path d="M16.7,16.3 V17.6 H18.3 V16.3" stroke="#fff" stroke-width="0.6" fill="none"/></svg></div>
<div class="t lk" style="left:851px;top:512px">NinJump</div>
<div class="ab" style="left:1029px;top:512px"><svg class="ar" width="11" height="11" viewBox="0 0 11 11"><path d="M5.5,0.2 V9.5 M1.4,6 L5.5,9.8 L9.6,6" fill="none" stroke="#dd1111" stroke-width="1.1"/></svg></div>
<div class="t" style="left:1046px;top:512px">8</div>
<div class="ib" style="left:821px;top:542px"><svg class="ic" width="22" height="22" viewBox="0 0 22 22"><rect x="0" y="0" width="22" height="22" rx="2.5" fill="#27c3f5"/><rect x="1.2" y="1.2" width="19.6" height="19.6" rx="2" fill="#5fdcfc" opacity="0.45"/><path d="M2.6,12 C2.6,8 5,4.6 9,3.1 C12,2 16,1.8 18.5,3.8 C21,5.8 20.9,10 20.2,12.6 L21.2,14 L19.6,15 L19.3,17.8 L17.6,17.8 L16.4,16.6 L14.8,19.8 L13.2,19.6 L12.6,17.2 L10.2,20.3 L8.6,20.1 L8.3,17.6 L5.2,18.9 L4,18.3 L5.2,16.1 L2.2,15.3 L1.4,14 Z" fill="#a3e83c" stroke="#121c08" stroke-width="0.9" stroke-linejoin="round"/><ellipse cx="11" cy="4.8" rx="3.2" ry="1.1" fill="#f3f2b0" transform="rotate(-12 11 4.8)"/><circle cx="6" cy="12.2" r="1.8" fill="#fff" stroke="#121c08" stroke-width="0.5"/><circle cx="13.4" cy="12.4" r="1.8" fill="#d8c8ea" stroke="#121c08" stroke-width="0.5"/><circle cx="6.6" cy="12.4" r="0.95" fill="#d2222e"/><circle cx="13.9" cy="12.6" r="0.95" fill="#d2222e"/></svg></div>
<div class="t lk" style="left:851px;top:547px">Squibble</div>
<div class="ab" style="left:1029px;top:547px"><svg class="ar" width="11" height="11" viewBox="0 0 11 11"><path d="M5.5,10.8 V2 M1.4,5.5 L5.5,1.7 L9.6,5.5" fill="none" stroke="#2b8a1e" stroke-width="1.1"/></svg></div>
<div class="t" style="left:1046px;top:547px">299</div>
<div class="ib" style="left:822px;top:580px"><svg class="ic" width="20" height="20" viewBox="0 0 20 20"><defs><linearGradient id="sg" x1="0" y1="0" x2="1" y2="1"><stop offset="0" stop-color="#49bdf2"/><stop offset="1" stop-color="#0c9be0"/></linearGradient></defs><g fill="url(#sg)"><circle cx="6.2" cy="6.2" r="5"/><circle cx="13.8" cy="13.8" r="5"/><circle cx="10" cy="10" r="8.2"/></g><path d="M13.2,6.6 C12.4,5.6 11.3,5.2 10,5.2 C8.2,5.2 6.9,6.1 6.9,7.5 C6.9,10.3 13.4,9.3 13.4,12.4 C13.4,13.9 12,14.9 10,14.9 C8.4,14.9 7.2,14.3 6.5,13.2" fill="none" stroke="#fff" stroke-width="2" stroke-linecap="round"/></svg></div>
<div class="t lk" style="left:851px;top:582px">Skype - free IM &amp; video calls</div>
<div class="ab" style="left:1029px;top:582px"><svg class="ar" width="11" height="11" viewBox="0 0 11 11"><path d="M5.5,10.8 V2 M1.4,5.5 L5.5,1.7 L9.6,5.5" fill="none" stroke="#2b8a1e" stroke-width="1.1"/></svg></div>
<div class="t" style="left:1046px;top:582px">3</div>
<div class="ib" style="left:822px;top:615px"><svg class="ic" width="20" height="20" viewBox="0 0 20 20"><rect x="2" y="2" width="16" height="16.2" rx="1.5" fill="#3a5899"/><rect x="2.5" y="15" width="15" height="2.8" fill="#6a80b9"/><path d="M10.2,18.2 V11.4 H8.3 V9.2 H10.2 V7.6 C10.2,5.3 11.3,4.2 13.5,4.2 H15.4 V6.9 H14.3 C13.4,6.9 13.1,7.2 13.1,8 V9.2 H15.6 L15.3,11.4 H13.1 V18.2 Z" fill="#fff"/></svg></div>
<div class="t lk" style="left:851px;top:617px">Facebook for Android</div>
<div class="ab" style="left:1029px;top:617px"><svg class="ar" width="11" height="11" viewBox="0 0 11 11"><path d="M5.5,0.2 V9.5 M1.4,6 L5.5,9.8 L9.6,6" fill="none" stroke="#dd1111" stroke-width="1.1"/></svg></div>
<div class="t" style="left:1046px;top:617px">21</div>
<div class="ib" style="left:822px;top:650px"><svg class="ic" width="20" height="20" viewBox="0 0 20 20"><rect x="0" y="0" width="20" height="20" rx="3" fill="#6b4a32"/><rect x="0.8" y="0.8" width="18.4" height="18.4" rx="2.5" fill="#ece4d8"/><path d="M0.8,6 V3 C0.8,1.6 1.6,0.8 3,0.8 H17 C18.4,0.8 19.2,1.6 19.2,3 V6 Z" fill="#8e6446"/><rect x="1" y="1" width="1.3" height="5" fill="#e8342a"/><rect x="2.3" y="1" width="1.1" height="5" fill="#f29a28"/><rect x="3.4" y="1" width="1.1" height="5" fill="#9ad33a"/><rect x="4.5" y="1" width="1.2" height="5" fill="#2f8ee0"/><rect x="13.5" y="0.8" width="5.7" height="5.2" rx="1" fill="#151515"/><circle cx="10" cy="11" r="5.3" fill="#5a4636"/><circle cx="10" cy="10.7" r="4.8" fill="#0c0c0e"/><circle cx="10" cy="10.7" r="3.3" fill="#274a5c"/><circle cx="10" cy="10.7" r="1.8" fill="#080a10"/><circle cx="8.8" cy="9.3" r="0.8" fill="#6fc0d8"/></svg></div>
<div class="t lk" style="left:851px;top:652px">Instagram</div>
<div class="t" style="left:1046px;top:652px">2</div>
<div class="ib" style="left:822px;top:685px"><svg class="ic" width="20" height="20" viewBox="0 0 20 20"><rect x="0" y="0" width="20" height="20" rx="3" fill="#e2b81c"/><ellipse cx="15" cy="5" rx="4.5" ry="4" fill="#f0d878"/><ellipse cx="6" cy="12" rx="3" ry="5" fill="#ecc935" opacity="0.7"/><path d="M1.4,15.5 L9,6 L9.8,4 L14,2.2 L14.6,4.2 L10.5,6.5 L3,16.4 Z" fill="#e3241a"/><path d="M8.5,5 L16.6,5.5 L13,8.5 L14.5,13.5 L13.3,14.6 L11.5,11.5 L7.5,17 L5.5,18.6 L4.8,17.4 L9,10 Z" fill="#121212"/><path d="M9.2,5.6 L14,4.6 L14,6.1 L9.6,7 Z" fill="#2a8a9a"/><path d="M8,13.6 L12.8,8.6" stroke="#e8eef5" stroke-width="1"/><path d="M3.6,12.8 L6,10.8" stroke="#2a6a80" stroke-width="1.4"/><path d="M15.6,15.6 H19.4 L19,18.6 L17.5,19.6 L16,18.6 Z" fill="#e3161b"/><path d="M16.7,16.3 V17.6 H18.3 V16.3" stroke="#fff" stroke-width="0.6" fill="none"/></svg></div>
<div class="t lk" style="left:851px;top:687px">NinJump</div>
<div class="ab" style="left:1029px;top:687px"><svg class="ar" width="11" height="11" viewBox="0 0 11 11"><path d="M5.5,10.8 V2 M1.4,5.5 L5.5,1.7 L9.6,5.5" fill="none" stroke="#2b8a1e" stroke-width="1.1"/></svg></div>
<div class="t" style="left:1046px;top:687px">7</div>
<div class="ib" style="left:821px;top:719px"><svg class="ic" width="22" height="22" viewBox="0 0 22 22"><rect x="0" y="0" width="22" height="22" rx="2.5" fill="#27c3f5"/><rect x="1.2" y="1.2" width="19.6" height="19.6" rx="2" fill="#5fdcfc" opacity="0.45"/><path d="M2.6,12 C2.6,8 5,4.6 9,3.1 C12,2 16,1.8 18.5,3.8 C21,5.8 20.9,10 20.2,12.6 L21.2,14 L19.6,15 L19.3,17.8 L17.6,17.8 L16.4,16.6 L14.8,19.8 L13.2,19.6 L12.6,17.2 L10.2,20.3 L8.6,20.1 L8.3,17.6 L5.2,18.9 L4,18.3 L5.2,16.1 L2.2,15.3 L1.4,14 Z" fill="#a3e83c" stroke="#121c08" stroke-width="0.9" stroke-linejoin="round"/><ellipse cx="11" cy="4.8" rx="3.2" ry="1.1" fill="#f3f2b0" transform="rotate(-12 11 4.8)"/><circle cx="6" cy="12.2" r="1.8" fill="#fff" stroke="#121c08" stroke-width="0.5"/><circle cx="13.4" cy="12.4" r="1.8" fill="#d8c8ea" stroke="#121c08" stroke-width="0.5"/><circle cx="6.6" cy="12.4" r="0.95" fill="#d2222e"/><circle cx="13.9" cy="12.6" r="0.95" fill="#d2222e"/></svg></div>
<div class="t lk" style="left:851px;top:722px">Squibble</div>
<div class="t" style="left:1046px;top:722px">15</div>

<div class="t b" style="left:177px;top:774px;font-size:12px;line-height:12px;transform:none">Top Handsets</div>
<div class="t b" style="left:757px;top:774px;font-size:12px;line-height:12px;transform:none">Top Categories</div>
<svg style="position:absolute;left:0;top:0" width="1271" height="1061" viewBox="0 0 1271 1061">
<path d="M304,887 L304.00,792.50 A94.5,94.5 0 0 1 347.43,970.93 Z" fill="#d830ad" stroke="#fff" stroke-width="1"/><path d="M304,887 L347.43,970.93 A94.5,94.5 0 0 1 262.16,971.73 Z" fill="#a321ea" stroke="#fff" stroke-width="1"/><path d="M304,887 L262.16,971.73 A94.5,94.5 0 0 1 211.29,905.29 Z" fill="#3466b2" stroke="#fff" stroke-width="1"/><path d="M304,887 L211.29,905.29 A94.5,94.5 0 0 1 224.85,835.37 Z" fill="#197a7a" stroke="#fff" stroke-width="1"/><path d="M304,887 L224.85,835.37 A94.5,94.5 0 0 1 262.16,802.27 Z" fill="#4aab99" stroke="#fff" stroke-width="1"/><path d="M304,887 L262.16,802.27 A94.5,94.5 0 0 1 304.00,792.50 Z" fill="#53b33b" stroke="#fff" stroke-width="1"/><path d="M838,887 L838.00,807.00 A80,80 0 0 1 888.61,948.96 Z" fill="#d830ad" stroke="#fff" stroke-width="1"/><path d="M838,887 L888.61,948.96 A80,80 0 0 1 768.39,926.42 Z" fill="#a321ea" stroke="#fff" stroke-width="1"/><path d="M838,887 L768.39,926.42 A80,80 0 0 1 760.90,865.65 Z" fill="#3466b2" stroke="#fff" stroke-width="1"/><path d="M838,887 L760.90,865.65 A80,80 0 0 1 796.41,818.66 Z" fill="#197a7a" stroke="#fff" stroke-width="1"/><path d="M838,887 L796.41,818.66 A80,80 0 0 1 825.98,807.91 Z" fill="#4aab99" stroke="#fff" stroke-width="1"/><path d="M838,887 L825.98,807.91 A80,80 0 0 1 838.00,807.00 Z" fill="#53b33b" stroke="#fff" stroke-width="1"/>
<g font-family="Liberation Sans" font-size="11" fill="#fff"><text x="369.2" y="874.5" text-anchor="middle">42.4%</text><text x="305.9" y="967.0" text-anchor="middle">14.9%</text><text x="250.7" y="931.0" text-anchor="middle">14.6%</text><text x="239.1" y="877.0" text-anchor="middle">12.3%</text><text x="257.5" y="836.0" text-anchor="middle">8.5%</text><text x="287.5" y="817.0" text-anchor="middle">7.3%</text><text x="888.6" y="872.0" text-anchor="middle">39.1%</text><text x="828.2" y="948.0" text-anchor="middle">27.7%</text><text x="786.6" y="896.5" text-anchor="middle">12.5%</text><text x="793.2" y="856.0" text-anchor="middle">12%</text></g>
</svg>
<div class="sq" style="left:448px;top:792px;background:#d830ad"></div>
<div class="t lg" style="left:465px;top:792px">Samsung Galaxy S II</div>
<div class="sq" style="left:448px;top:811px;background:#a321ea"></div>
<div class="t lg" style="left:465px;top:811px">Samsung Galaxy S</div>
<div class="sq" style="left:448px;top:830px;background:#3466b2"></div>
<div class="t lg" style="left:465px;top:830px">Samsung Galaxy Note</div>
<div class="sq" style="left:448px;top:849px;background:#197a7a"></div>
<div class="t lg" style="left:465px;top:849px">Samsung Galaxy Ace</div>
<div class="sq" style="left:448px;top:868px;background:#4aab99"></div>
<div class="t lg" style="left:465px;top:868px">Samsung Galaxy Mini</div>
<div class="sq" style="left:448px;top:887px;background:#53b33b"></div>
<div class="t lg" style="left:465px;top:887px">Gamsung Galaxy Y</div>
<div class="sq" style="left:936px;top:792px;background:#d830ad"></div>
<div class="t lg" style="left:953px;top:792px">Games</div>
<div class="sq" style="left:936px;top:811px;background:#a321ea"></div>
<div class="t lg" style="left:953px;top:811px">Tools</div>
<div class="sq" style="left:936px;top:830px;background:#3466b2"></div>
<div class="t lg" style="left:953px;top:830px">Multimedia</div>
<div class="sq" style="left:936px;top:849px;background:#197a7a"></div>
<div class="t lg" style="left:953px;top:849px">Social</div>
<div class="sq" style="left:936px;top:868px;background:#4aab99"></div>
<div class="t lg" style="left:953px;top:868px">Health</div>
<div class="sq" style="left:936px;top:887px;background:#53b33b"></div>
<div class="t lg" style="left:953px;top:887px">Books</div>

<div class="hl" style="top:1012px;background:#e6e6e6"></div>
<div class="t" style="left:176px;top:1031px">Appreciate</div>
<div class="t" style="left:256px;top:1031px">Terms</div>
</div></body></html>
